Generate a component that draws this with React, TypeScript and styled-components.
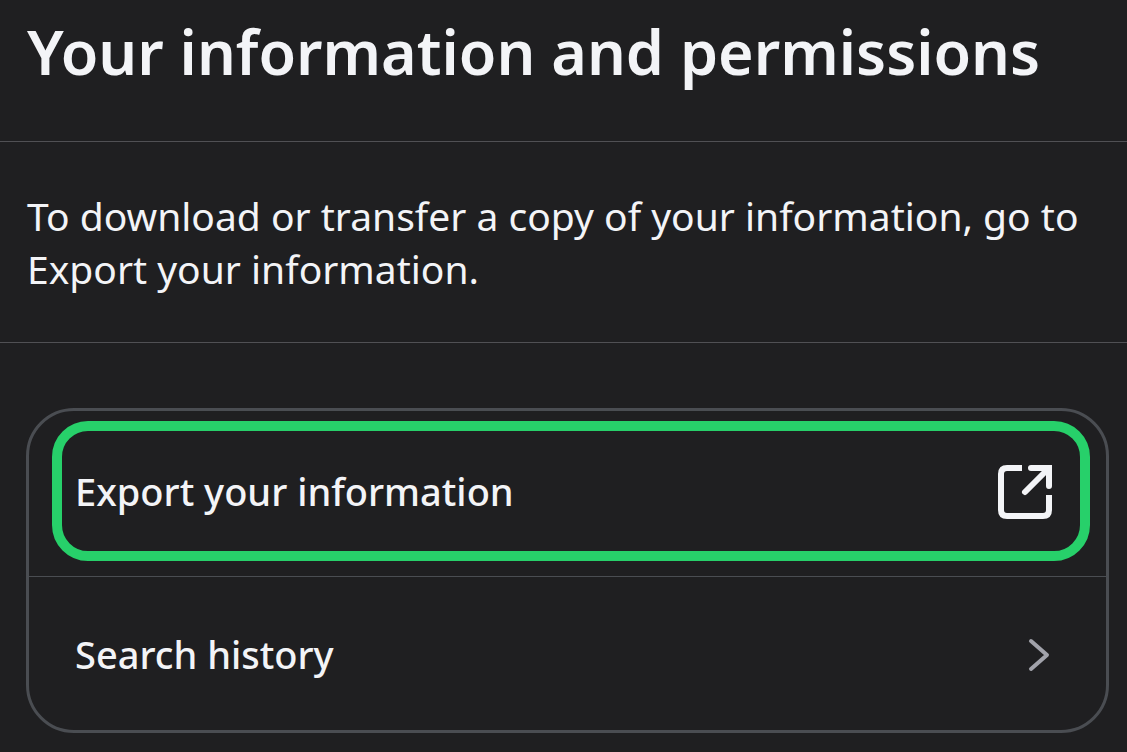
import React from 'react';
import styled, { createGlobalStyle } from 'styled-components';

const GlobalStyle = createGlobalStyle`
  * { box-sizing: border-box; }
  html { background: #1f1f21; }
  body { margin: 0; color: #f3f4f7; font-family: "Noto Sans", sans-serif; }
`;

const Page = styled.main`
  min-height: 100vh;
  padding-bottom: 19px;
`;

const Header = styled.header`
  padding: 12px 27px 49px;
  border-bottom: 1px solid #505054;
`;

const Title = styled.h1`
  margin: 0;
  font-size: 61px;
  line-height: 80px;
  font-weight: 600;
`;

const Intro = styled.p`
  margin: 0;
  padding: 47px 27px;
  border-bottom: 1px solid #505054;
  font-size: 39px;
  line-height: 53px;
`;

const List = styled.nav`
  margin: 65px 18px 0 26px;
  border: 3px solid #4a4d52;
  border-radius: 48px;
`;

const Highlighted = styled.div`
  padding: 10px 16px 15px 23px;
  border-bottom: 1px solid #4a4d52;
`;

const Row = styled.a<{ $highlight?: boolean }>`
  display: flex;
  align-items: center;
  justify-content: space-between;
  color: inherit;
  text-decoration: none;
  font-size: 38px;
  line-height: 53px;
  font-weight: 500;
  ${({ $highlight }) => $highlight
    ? 'min-height: 140px; padding: 0 27px 0 13px; border: 10px solid #27d06a; border-radius: 36px;'
    : 'min-height: 153px; padding: 2px 52px 0 46px;'}
`;

export default function App() {
  return (
    <>
      <GlobalStyle />
      <Page>
        <Header><Title>Your information and permissions</Title></Header>
        <Intro>To download or transfer a copy of your information, go to Export your information.</Intro>
        <List aria-label="Your information">
          <Highlighted>
            <Row href="#export" $highlight>
              Export your information
              <svg width="56" height="56" viewBox="0 0 56 56" fill="none" stroke="#f3f4f7" strokeWidth="6" aria-hidden="true">
                <path d="M25 5H10Q4 5 4 11V47Q4 53 10 53H46Q52 53 52 47V32" />
                <path d="M34 5H52V23M51 6L28 29" strokeLinecap="round" />
              </svg>
            </Row>
          </Highlighted>
          <Row href="#history">
            Search history
            <svg width="26" height="36" viewBox="0 0 26 36" fill="none" stroke="#a2a3ab" strokeWidth="4" strokeLinecap="round" strokeLinejoin="round" aria-hidden="true">
              <path d="M3 4L19 18L3 32" />
            </svg>
          </Row>
        </List>
      </Page>
    </>
  );
}
